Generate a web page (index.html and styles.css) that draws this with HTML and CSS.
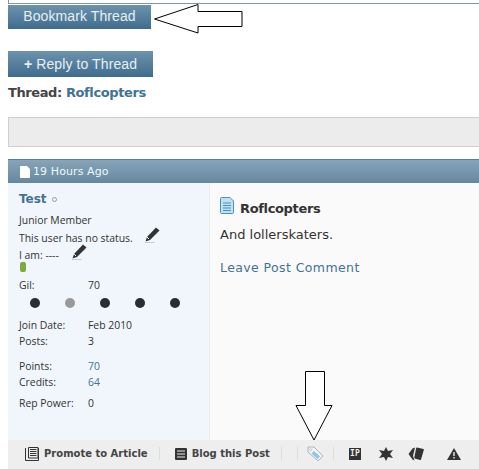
FILE: index.html
```html
<!DOCTYPE html>
<html lang="en">
<head>
  <meta charset="UTF-8" />
  <title>Roflcopters</title>
  <link rel="stylesheet" href="styles.css">
</head>
<body>
  <div class="top-box"></div>
  <a class="button bookmark">Bookmark Thread</a>
  <a class="button reply"><b>+</b> Reply to Thread</a>
  <h1 class="thread-title">Thread: <span>Roflcopters</span></h1>
  <div class="toolbar"></div>

  <div class="post">
    <div class="post-head">
      <svg class="head-icon" width="10" height="12" viewBox="0 0 10 12"><path d="M0 1 Q0 0 1 0 H7 L10 3 V11 Q10 12 9 12 H1 Q0 12 0 11 Z" fill="#fff"/></svg>
      <span>19 Hours Ago</span>
    </div>
    <div class="post-body">
      <div class="user">
        <div class="user-name"><a>Test</a><i class="offline"></i></div>
        <div class="user-title">Junior Member</div>
        <div class="user-status">This user has no status.
          <svg class="pencil" width="16" height="16" viewBox="0 0 16 16"><path d="M12 .5 L15.5 3.5 L6 13 L1.5 14.5 L3 10 Z" fill="#333"/><path d="M5 12 L3 10" stroke="#f0f6fb"/><path d="M1 15.5 H11" stroke="#ccc"/></svg>
        </div>
        <div class="user-iam">I am: ----
          <svg class="pencil" width="16" height="16" viewBox="0 0 16 16"><path d="M12 .5 L15.5 3.5 L6 13 L1.5 14.5 L3 10 Z" fill="#333"/><path d="M5 12 L3 10" stroke="#f0f6fb"/><path d="M1 15.5 H11" stroke="#ccc"/></svg>
        </div>
        <div class="mood"></div>
        <div class="stat gil"><span>Gil:</span><span>70</span></div>
        <div class="dots"><i></i><i class="off"></i><i></i><i></i><i></i></div>
        <div class="stat"><span>Join Date:</span><span>Feb 2010</span></div>
        <div class="stat"><span>Posts:</span><span>3</span></div>
        <div class="stat points"><span>Points:</span><a>70</a></div>
        <div class="stat"><span>Credits:</span><a>64</a></div>
        <div class="stat rep"><span>Rep Power:</span><span>0</span></div>
      </div>
      <div class="content">
        <h2 class="post-title">
          <svg width="14" height="17" viewBox="0 0 14 17"><path d="M.5 1.5 Q.5 .5 1.5 .5 H10 L13.5 4 V15.5 Q13.5 16.5 12.5 16.5 H1.5 Q.5 16.5 .5 15.5 Z" fill="#bfe0f5" stroke="#4d8fc0"/><path d="M3 6 H11 M3 8.5 H11 M3 11 H11 M3 13.5 H11" stroke="#4d8fc0"/></svg>
          Roflcopters
        </h2>
        <p class="post-text">And lollerskaters.</p>
        <a class="comment-link">Leave Post Comment</a>
      </div>
    </div>
    <div class="post-foot">
      <a class="foot-link promote">
        <svg width="14" height="14" viewBox="0 0 14 14"><path d="M.5 1 V13.5 H13.5 V1 M3.5 .5 H13 V11 H3.5 Z" fill="none" stroke="#333"/><path d="M5 2.5 H11.5 M5 4.5 H11.5 M5 6.5 H11.5 M5 8.5 H11.5" stroke="#333"/></svg>
        Promote to Article</a>
      <i class="sep"></i>
      <a class="foot-link blog">
        <svg width="12" height="12" viewBox="0 0 12 12"><rect width="12" height="12" rx="1" fill="#333"/><path d="M2 3 H10 M2 6 H10 M2 9 H10" stroke="#eee"/></svg>
        Blog this Post</a>
      <i class="sep"></i>
      <i class="sep second"></i>
      <svg class="tag" width="16" height="15" viewBox="0 0 16 15"><path d="M1 1 H7 L15 9 Q16 10 15 11 L12 14 Q11 15 10 14 L1 6 Z" fill="#f2f5f7" stroke="#a9b4bb"/><path d="M7 5 L13 10.5 L10.5 13 L4.5 7.5 Z" fill="#8cc6ee"/><circle cx="3.8" cy="3.8" r="1.1" fill="#fff" stroke="#a9b4bb" stroke-width=".6"/></svg>
      <i class="sep third"></i>
      <span class="ip">IP</span>
      <svg class="star" width="14" height="14" viewBox="0 0 14 14"><path d="M7 0 L9 4 L14 3 L11 7 L14 11 L9 10 L7 14 L5 10 L0 11 L3 7 L0 3 L5 4 Z" fill="#333"/></svg>
      <svg class="cards" width="16" height="14" viewBox="0 0 16 14"><path d="M4.5 1.5 L7 .5 L5 9 L6.5 13.5 L4.5 12.5 L.5 7 Z" fill="#333"/><path d="M9 .5 L15.5 2 Q16 2.3 15.8 3 L13 12.5 Q12.7 13.2 12 13 L6.8 11.5 Q6.2 11.2 6.3 10.5 L8.2 1 Q8.4 .4 9 .5 Z" fill="#333"/></svg>
      <svg class="warn" width="14" height="12" viewBox="0 0 14 12"><path d="M7 0 L14 12 H0 Z" fill="#333"/><path d="M7 4 V8 M7 9 V10.5" stroke="#eee" stroke-width="1.4"/></svg>
    </div>
  </div>

  <svg class="arrow arrow-left" width="94" height="32" viewBox="0 0 94 32"><path d="M.5 15 L44 .5 V7.5 H88 V22.5 H44 V29 Z" transform="translate(0 1)" fill="#fff" stroke="#000"/></svg>
  <svg class="arrow arrow-down" width="38" height="70" viewBox="0 0 38 70"><path d="M10.5 .5 H29.5 V34.5 H37 L19 69 L1 34.5 H10.5 Z" fill="#fff" stroke="#000"/></svg>
</body>
</html>
```

FILE: styles.css
```css
html, body {
  margin: 0;
  height: 469px;
  overflow: hidden;
}
body {
  position: relative;
  background-color: #fff;
  color: #333;
  font-family: "Open Sans", "Noto Sans", sans-serif;
  font-size: 10.4px;
  padding-left: 8px;
}
a {
  color: #417394;
}
.top-box {
  height: 3px;
  border: 1px solid #7f98a8;
  border-top: none;
  border-right: none;
  margin-bottom: 1px;
}
.button {
  display: block;
  box-sizing: border-box;
  background: linear-gradient(#6d93ad, #3f6c8d);
  color: #e8eff4;
  font-family: "Liberation Sans", Arial, sans-serif;
  font-size: 14px;
  letter-spacing: 0.1px;
  text-align: center;
}
.bookmark {
  width: 143px;
  height: 24px;
  line-height: 23px;
  margin-top: 1px;
}
.reply {
  width: 145px;
  height: 26px;
  line-height: 26px;
  margin-top: 22px;
}
.thread-title {
  margin: 7px 0 0;
  font-family: "DejaVu Sans", Verdana, sans-serif;
  font-size: 13px;
  line-height: 18px;
  letter-spacing: -0.4px;
  color: #444;
}
.thread-title span {
  color: #417394;
}
.toolbar {
  height: 28px;
  margin-top: 15px;
  background: #ececec;
  border: 1px solid #d0d0d0;
  border-right: none;
}
.post {
  margin-top: 12px;
}
.post-head {
  display: flex;
  align-items: center;
  gap: 3px;
  box-sizing: border-box;
  height: 24px;
  padding-left: 12px;
  background: linear-gradient(#86a4ba, #66889f);
  border-top: 1px solid #5d7f96;
  color: #f2f6f8;
  font-family: "DejaVu Sans", Verdana, sans-serif;
  font-size: 11px;
  letter-spacing: 0.1px;
}
.post-body {
  display: flex;
  height: 257px;
}
.user {
  box-sizing: border-box;
  width: 202px;
  padding: 9px 0 0 11px;
  background: #f0f6fb;
  border-right: 1px solid #e8eef2;
}
.user-name {
  display: flex;
  align-items: center;
  gap: 5px;
  font-family: "DejaVu Sans", Verdana, sans-serif;
  font-size: 12px;
  font-weight: bold;
  line-height: 14px;
}
.offline {
  width: 3px;
  height: 3px;
  border: 1px solid #999;
  border-radius: 50%;
}
.user-title {
  margin-top: 7px;
  line-height: 15px;
}
.user-status, .user-iam {
  display: flex;
  align-items: center;
  line-height: 16px;
}
.user-status {
  height: 17px;
  margin-top: 1px;
}
.user-iam {
  height: 18px;
}
.pencil {
  margin: 0 0 6px 11px;
}
.user-iam .pencil {
  margin-left: 12px;
}
.mood {
  width: 6px;
  height: 10px;
  margin: -2px 0 0 1px;
  background: #7cab3a;
  border-radius: 2px;
}
.stat {
  display: grid;
  grid-template-columns: 69px auto;
  line-height: 16px;
}
.gil {
  margin-top: 5px;
}
.dots {
  display: flex;
  gap: 25px;
  margin: 5px 0 9px 11px;
}
.dots i {
  width: 10px;
  height: 10px;
  border-radius: 50%;
  background: #262e36;
}
.dots .off {
  background: #999;
}
.points {
  margin-top: 9px;
}
.rep {
  margin-top: 5px;
}
.content {
  flex: 1;
  padding: 17px 0 0 10px;
  background: #fafafa;
}
.post-title {
  display: flex;
  align-items: center;
  gap: 6px;
  margin: 0;
  font-family: "DejaVu Sans", Verdana, sans-serif;
  font-size: 13px;
  line-height: 18px;
  letter-spacing: -0.35px;
}
.post-title svg {
  margin: -4px 0 4px;
}
.post-text {
  margin: 9px 0 0;
  font-family: "DejaVu Sans", Verdana, sans-serif;
  font-size: 13px;
  line-height: 16px;
}
.comment-link {
  display: block;
  margin-top: 17px;
  font-family: "DejaVu Sans", Verdana, sans-serif;
  font-size: 12.5px;
  letter-spacing: 0.4px;
  line-height: 16px;
}
.post-foot {
  display: flex;
  align-items: center;
  height: 29px;
  padding-bottom: 2px;
  box-sizing: border-box;
  background: #eee;
}
.foot-link {
  display: flex;
  align-items: center;
  gap: 5px;
  color: #444;
  font-family: "DejaVu Sans", Verdana, sans-serif;
  font-size: 10px;
  font-weight: bold;
}
.promote {
  margin-left: 17px;
}
.blog {
  margin-left: 15px;
}
.sep {
  width: 1px;
  height: 13px;
  margin-left: 11px;
  background: #ddd;
}
.sep.second {
  margin-left: 15px;
}
.tag {
  margin-left: 9px;
}
.sep.third {
  margin-left: 10px;
}
.ip {
  margin-left: 15px;
  width: 12px;
  height: 12px;
  background: #333;
  color: #eee;
  font-family: "DejaVu Sans Mono", monospace;
  font-size: 8px;
  font-weight: bold;
  line-height: 12px;
  text-align: center;
}
.star {
  margin-left: 18px;
}
.cards {
  margin-left: 15px;
}
.warn {
  margin-left: 23px;
}
.arrow {
  position: absolute;
}
.arrow-left {
  left: 154px;
  top: 3px;
}
.arrow-down {
  left: 295px;
  top: 371px;
}
```
